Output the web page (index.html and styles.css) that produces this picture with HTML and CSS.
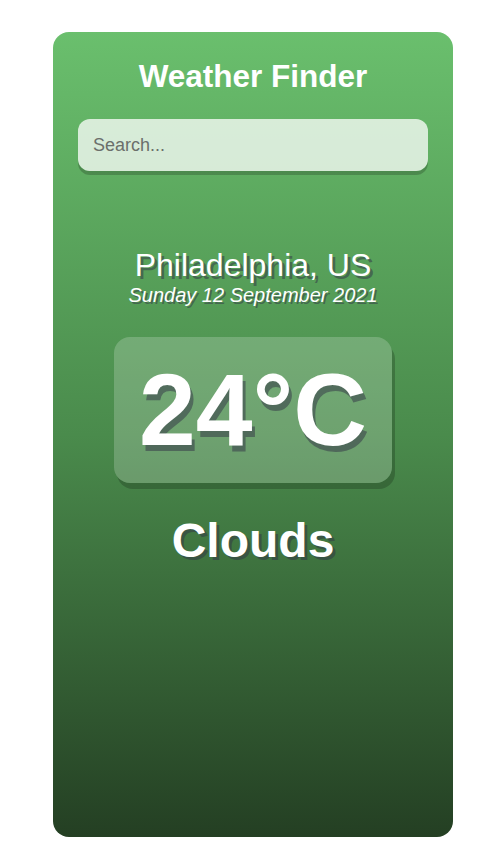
FILE: index.html
```
<!DOCTYPE html>
<html>
<head>
<meta charset="utf-8">
<link rel="stylesheet" href="styles.css">
</head>
<body>
<main class="card">
  <h1 class="title">Weather Finder</h1>
  <div class="search-box">
    <input class="search-bar" type="text" placeholder="Search...">
  </div>
  <div class="location-box">
    <div class="location">Philadelphia, US</div>
    <div class="date">Sunday 12 September 2021</div>
  </div>
  <div class="weather-box">
    <div class="temp">24°C</div>
    <div class="weather">Clouds</div>
  </div>
</main>
</body>
</html>
```
FILE: styles.css
```
* { box-sizing: border-box; }
html, body { margin: 0; padding: 0; background: #fff; }
body {
  font-family: "Liberation Sans", Arial, sans-serif;
  padding: 32px 0 0 53px;
}
.card {
  width: 400px;
  height: 805px;
  border-radius: 16px;
  padding: 0 25px;
  background: linear-gradient(to bottom, #6abf6d 0%, #4a8b4c 50%, #243f23 100%);
  overflow: hidden;
}
.title {
  margin: 0;
  padding-top: 26px;
  color: #fff;
  font-size: 31.5px;
  font-weight: 700;
  line-height: 36px;
  text-align: center;
}
.search-box { margin-top: 25px; }
.search-bar {
  display: block;
  width: 100%;
  height: 52px;
  padding: 0 15px;
  border: none;
  outline: none;
  appearance: none;
  background-color: rgba(255, 255, 255, 0.75);
  border-radius: 12px;
  box-shadow: 0 4px rgba(0, 0, 0, 0.2);
  color: #313131;
  font-family: "Liberation Sans", Arial, sans-serif;
  font-size: 18px;
}
.search-bar::placeholder { color: #6b6f6b; }
.location-box { margin-top: 76px; }
.location {
  color: #fff;
  font-size: 32px;
  font-weight: 400;
  line-height: 36px;
  text-align: center;
  text-shadow: 3px 3px rgba(50, 50, 70, 0.5);
}
.date {
  color: #fff;
  font-size: 20px;
  font-style: italic;
  line-height: 24px;
  text-align: center;
  text-shadow: 2px 2px rgba(50, 50, 70, 0.5);
}
.weather-box { text-align: center; }
.temp {
  display: inline-block;
  margin: 30px auto 30px;
  padding: 15px 25px;
  background-color: rgba(255, 255, 255, 0.2);
  border-radius: 16px;
  color: #fff;
  font-size: 102px;
  font-weight: 700;
  line-height: 116px;
  text-shadow: 3px 6px rgba(50, 50, 70, 0.5);
  box-shadow: 3px 6px rgba(0, 0, 0, 0.2);
}
.weather {
  color: #fff;
  font-size: 48px;
  font-weight: 700;
  line-height: 56px;
  text-shadow: 3px 3px rgba(50, 50, 70, 0.5);
}
```
